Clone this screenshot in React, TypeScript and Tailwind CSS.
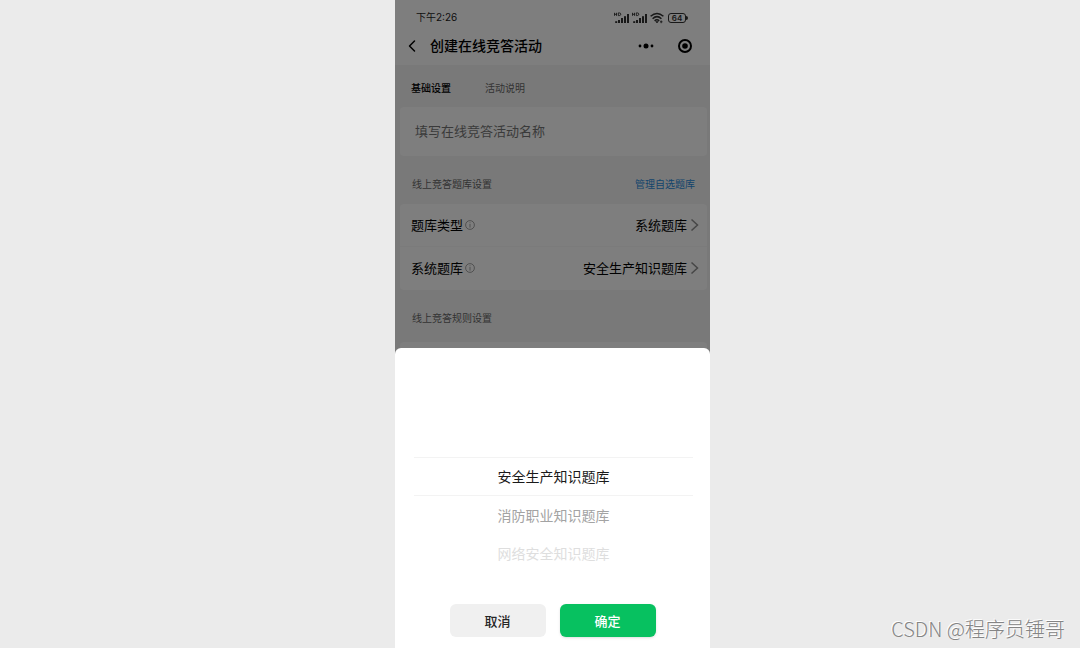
import { useState } from "react";
import { ChevronLeft } from "lucide-react";

const banks = [
  { name: "安全生产知识题库", tone: "h-[39px] border-y border-[#f3f3f3] text-[#1a1a1a]" },
  { name: "消防职业知识题库", tone: "h-[38px] text-[#a3a3a3]" },
  { name: "网络安全知识题库", tone: "h-[38px] text-[#dedede]" },
];

function Signal() {
  return (
    <svg width="16" height="12" viewBox="0 0 16 12" fill="#303030" aria-hidden="true">
      <path d="M0.5 0.8V3.8M0.5 2.3H2.5M2.5 0.8V3.8M4.3 0.9V3.6H5.3Q6.8 3.4 6.8 2.2T5.3 0.9Z" fill="none" stroke="#303030" strokeWidth="0.9" />
      <rect x="1.2" y="9.2" width="2" height="1.8" />
      <rect x="4" y="8" width="2" height="3" />
      <rect x="7" y="6" width="2" height="5" />
      <rect x="10" y="4.2" width="2" height="6.8" />
      <rect x="13" y="2" width="2" height="9" />
    </svg>
  );
}

function StatusIcons() {
  return (
    <div className="flex items-center gap-[2px]">
      <Signal />
      <Signal />
      <svg width="14" height="12" viewBox="0 0 14 12" fill="none" stroke="#303030" strokeWidth="1.5" aria-hidden="true">
        <path d="M0.6 4.3Q7 -1.4 13.4 4.3" />
        <path d="M2.6 6.7Q7 2.6 11.4 6.7" />
        <path d="M4.6 8.9Q7 6.7 9.2 8.9" />
        <path d="M5.8 9.6L7 11L8.2 9.6Z" fill="#303030" strokeWidth="0.6" />
        <path d="M10 9.8H12.5M11.2 8.5V11.2" strokeWidth="0.9" />
      </svg>
      <div className="ml-[2px] flex items-center">
        <span className="flex h-[10px] w-[18px] items-center justify-center rounded-[3px] border border-[#303030] font-['Inter',sans-serif] text-[8px] leading-none font-semibold text-[#303030]">
          64
        </span>
        <span className="h-1 w-[2px] rounded-r bg-[#303030]" />
      </div>
    </div>
  );
}

function Info() {
  return (
    <svg width="10" height="10" viewBox="0 0 10 10" fill="none" stroke="#8c8c8c" strokeWidth="0.8" aria-hidden="true">
      <circle cx="5" cy="5" r="4.4" />
      <path d="M5 2.4V3.2M5 4V7.6" />
    </svg>
  );
}

function Chevron() {
  return (
    <svg width="9" height="14" viewBox="0 0 9 14" fill="none" stroke="#8c8c8c" strokeWidth="1.5" aria-hidden="true">
      <path d="M1.5 1.5L7.5 7L1.5 12.5" />
    </svg>
  );
}

function SettingRow({ label, value }: { label: string; value: string }) {
  return (
    <button type="button" className="flex h-[43px] w-full items-center pr-2 pb-px pl-[11px] text-[13px] text-black">
      <span className="mr-[2px]">{label}</span>
      <Info />
      <span className="mr-[3px] ml-auto">{value}</span>
      <Chevron />
    </button>
  );
}

export default function App() {
  const [selected, setSelected] = useState(0);

  return (
    <div className="grid min-h-screen grid-cols-[395fr_minmax(315px,315fr)_370fr] bg-[#ebebeb] font-['Noto_Sans_CJK_SC',sans-serif]">
      <div />
      <div className="relative overflow-hidden bg-[#f3f3f3]">
        <header className="h-[65px] bg-[#fcfcfc]">
          <div className="flex h-[35px] items-center justify-between pr-[22px] pl-[21px]">
            <time className="font-['Inter','Noto_Sans_CJK_SC',sans-serif] text-[10px] text-[#1c1c1c]">下午2:26</time>
            <StatusIcons />
          </div>
          <div className="flex h-[21px] items-center pr-[18px] pl-[7px]">
            <button type="button" aria-label="返回" className="mr-2">
              <ChevronLeft size={20} strokeWidth={1.8} />
            </button>
            <h1 className="text-[14px] font-medium">创建在线竞答活动</h1>
            <button type="button" aria-label="更多" className="mr-6 ml-auto">
              <svg width="16" height="6" viewBox="0 0 16 6">
                <circle cx="2" cy="3" r="1.4" />
                <circle cx="8" cy="3" r="2.5" />
                <circle cx="14" cy="3" r="1.4" />
              </svg>
            </button>
            <button type="button" aria-label="关闭">
              <svg width="14" height="14" viewBox="0 0 14 14">
                <circle cx="7" cy="7" r="6" fill="none" stroke="#000" strokeWidth="2" />
                <circle cx="7" cy="7" r="2.8" />
              </svg>
            </button>
          </div>
        </header>
        <main className="pr-[3px] pl-[5px]">
          <nav className="flex h-[42px] items-center gap-[34px] px-[11px] pt-[2px] text-[10px]">
            <button type="button" className="font-medium text-black">基础设置</button>
            <button type="button" className="text-[#666666]">活动说明</button>
          </nav>
          <input
            aria-label="活动名称"
            placeholder="填写在线竞答活动名称"
            className="block h-[49px] w-full rounded bg-[#fcfcfc] px-[15px] pb-[2px] text-[13px] placeholder:text-[#757575]"
          />
          <div className="flex h-12 items-center justify-between px-3 pt-[6px] text-[10px]">
            <h2 className="text-[#666666]">线上竞答题库设置</h2>
            <a href="#banks" className="text-[#2a8ad9]">管理自选题库</a>
          </div>
          <section className="divide-y divide-[#f6f6f6] rounded bg-[#fcfcfc]">
            <SettingRow label="题库类型" value="系统题库" />
            <SettingRow label="系统题库" value={banks[selected].name} />
          </section>
          <h2 className="flex h-[52px] items-center px-3 pt-[2px] text-[10px] text-[#666666]">线上竞答规则设置</h2>
          <section className="h-12 rounded bg-[#fcfcfc]" />
        </main>
        <div className="absolute inset-0 bg-black/50" />
        <div role="dialog" aria-label="选择题库" className="absolute inset-x-0 bottom-0 rounded-t-md bg-white pt-[109px] pb-[11px]">
          <div className="mr-[17px] ml-[19px] flex flex-col text-[14px]">
            {banks.map((bank, i) => (
              <button key={bank.name} type="button" onClick={() => setSelected(i)} className={bank.tone}>
                {bank.name}
              </button>
            ))}
          </div>
          <div className="mt-8 flex justify-center gap-[14px] text-[13px] font-medium">
            <button type="button" className="h-[33px] w-24 rounded-md bg-[#f0f0f0] text-[#262626]">取消</button>
            <button type="button" className="h-[33px] w-24 rounded-md bg-[#07c160] text-white shadow-sm">确定</button>
          </div>
        </div>
      </div>
      <footer className="flex items-end justify-end pr-[15px] pb-1 text-[20px] font-light whitespace-nowrap text-[#858585] [text-shadow:-1px_-1px_0_#ffffff]">
        CSDN @程序员锤哥
      </footer>
    </div>
  );
}
